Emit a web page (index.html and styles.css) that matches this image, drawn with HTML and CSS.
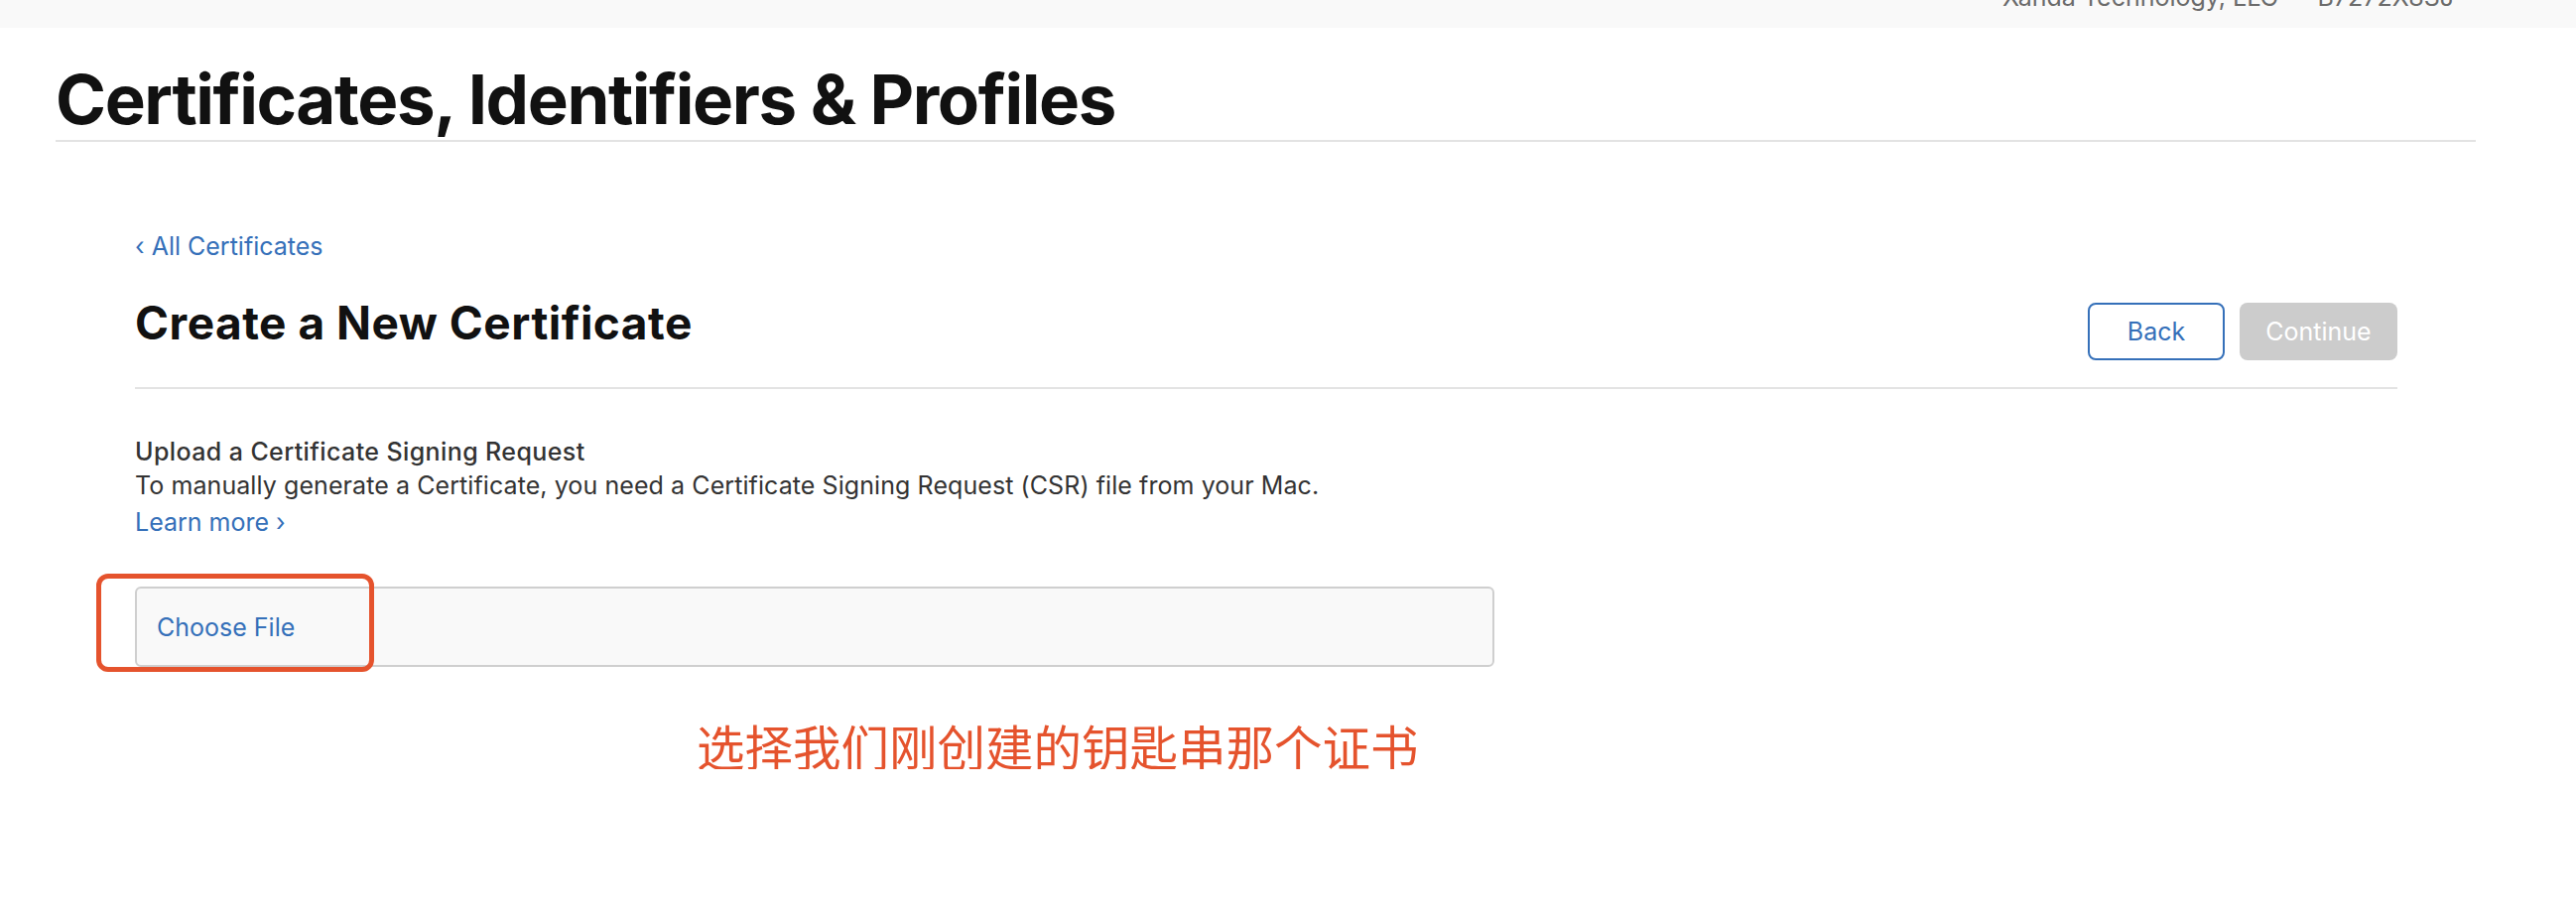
FILE: index.html
```html
<!DOCTYPE html>
<html lang="en">
<head>
<meta charset="utf-8">
<title>Certificates, Identifiers &amp; Profiles</title>
<link rel="stylesheet" href="styles.css">
</head>
<body>
<div class="topbar"><span class="account">Xanda Technology, LLC&nbsp;&nbsp;-&nbsp;&nbsp;B7272X8SJ</span></div>
<header class="header">
  <h1 class="page-title">Certificates, Identifiers &amp; Profiles</h1>
</header>
<main class="main">
  <a class="back-link" href="#">‹ All Certificates</a>
  <div class="titlebar">
    <h2 class="section-title">Create a New Certificate</h2>
    <div class="actions">
      <button class="btn btn-back">Back</button>
      <button class="btn btn-continue">Continue</button>
    </div>
  </div>
  <section class="upload">
    <div class="upload-heading">Upload a Certificate Signing Request</div>
    <div class="upload-text">To manually generate a Certificate, you need a Certificate Signing Request (CSR) file from your Mac.</div>
    <a class="learn-more" href="#">Learn more ›</a>
  </section>
  <div class="file-wrap">
    <div class="file-box"><span class="choose">Choose File</span></div>
    <div class="highlight"></div>
  </div>
  <div class="note">选择我们刚创建的钥匙串那个证书</div>
</main>
</body>
</html>
```
FILE: styles.css
```css
html, body {
  margin: 0;
  padding: 0;
  background: #ffffff;
}
body {
  font-family: Inter, "Noto Sans", "Liberation Sans", sans-serif;
  color: #333333;
}
.topbar {
  height: 28px;
  background: #f9f9f9;
  overflow: hidden;
  display: flex;
  justify-content: flex-end;
  padding-right: 123px;
}
.account {
  font-size: 25px;
  line-height: 25px;
  margin-top: -15px;
  color: #6b6b6b;
  white-space: nowrap;
}
.header {
  margin: 0 101px 0 56px;
  border-bottom: 2px solid #e3e3e3;
}
.page-title {
  margin: 38px 0 0 0;
  padding-bottom: 6px;
  font-size: 69px;
  line-height: 69px;
  font-weight: 700;
  letter-spacing: -1.4px;
  color: #111111;
}
.main {
  margin: 0 180px 0 136px;
}
.back-link {
  display: block;
  margin-top: 90px;
  font-size: 25px;
  line-height: 30px;
  color: #3570b9;
  text-decoration: none;
}
.titlebar {
  margin-top: 40px;
  display: flex;
  justify-content: space-between;
  align-items: flex-start;
  padding-bottom: 27px;
  border-bottom: 2px solid #e3e3e3;
}
.section-title {
  margin: 0;
  font-size: 46px;
  line-height: 44px;
  font-weight: 700;
  letter-spacing: 0.5px;
  color: #111111;
}
.actions {
  display: flex;
  gap: 15px;
  margin-top: 2px;
}
.btn {
  height: 58px;
  border-radius: 8px;
  font-family: Inter, "Liberation Sans", sans-serif;
  font-size: 25px;
  padding: 0;
  cursor: pointer;
}
.btn-back {
  width: 138px;
  background: #ffffff;
  border: 2px solid #3570b9;
  color: #3570b9;
}
.btn-continue {
  width: 159px;
  background: #cccccc;
  border: none;
  color: #ffffff;
}
.upload {
  margin-top: 46px;
  font-size: 25px;
  line-height: 34px;
}
.upload-heading {
  font-weight: 500;
  letter-spacing: 0.4px;
  color: #333333;
}
.upload-text {
  letter-spacing: 0.08px;
  color: #333333;
}
.learn-more {
  display: block;
  margin-top: 3px;
  color: #3570b9;
  text-decoration: none;
}
.file-wrap {
  position: relative;
  margin-top: 48px;
  width: 1370px;
}
.file-box {
  height: 77px;
  box-sizing: content-box;
  border: 2px solid #cfcfcf;
  border-radius: 6px;
  background: #f9f9f9;
  display: flex;
  align-items: center;
  padding-left: 20px;
}
.choose {
  font-size: 25px;
  color: #3570b9;
}
.highlight {
  position: absolute;
  left: -39px;
  top: -13px;
  width: 280px;
  height: 99px;
  box-sizing: border-box;
  border: 5px solid #e5532d;
  border-radius: 12px;
}
.note {
  margin: 55px 0 0 566px;
  font-family: "Noto Sans CJK SC", sans-serif;
  font-size: 48.5px;
  line-height: 48px;
  color: #e5532d;
  white-space: nowrap;
}
```
